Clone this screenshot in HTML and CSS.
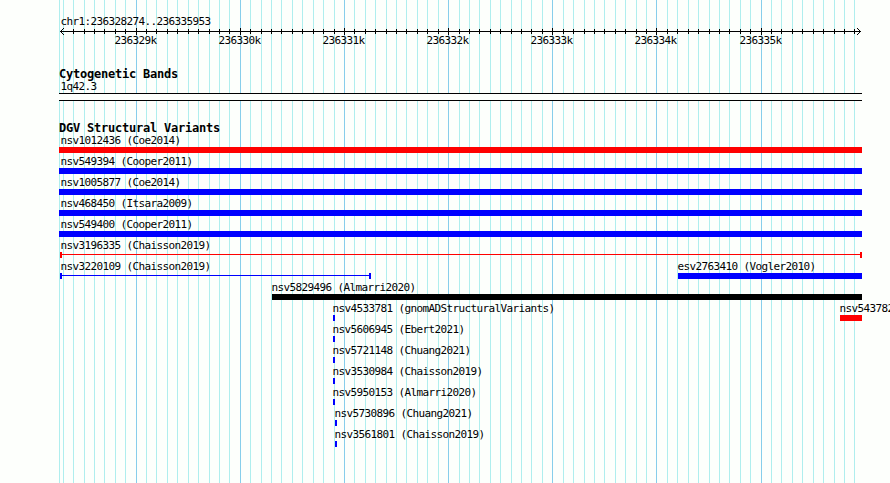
FILE: index.html
```html
<!DOCTYPE html>
<html lang="en">
<head>
    <meta charset="UTF-8">
    <title>chr1:236328274..236335953</title>
    <link rel="stylesheet" href="styles.css">
</head>
<body>

<div class="browser">
    <svg class="gridlines" id="gridlines" width="890" height="483" shape-rendering="crispEdges"></svg>

    <div class="panel">
        <div class="region">chr1:236328274..236335953</div>
        <svg class="ruler" id="ruler" width="830" height="7" shape-rendering="crispEdges"></svg>
        <div class="ruler-labels" id="ruler-labels"></div>

        <h2 class="track-title">Cytogenetic Bands</h2>
        <div class="label band-label">1q42.3</div>
        <div class="band"></div>

        <h2 class="track-title variants-title">DGV Structural Variants</h2>
        <div class="variants" id="variants"></div>
    </div>
</div>

<script src="script.js"></script>
</body>
</html>
```

FILE: styles.css
```css
body {
    margin: 0;
    background-color: #fdfffc;
    color: #000;
    font-family: "DejaVu Sans Mono", monospace;
    overflow: hidden;
}
.browser {
    position: relative;
    width: 890px;
    height: 483px;
    overflow: hidden;
}
/* grid sits behind every track */
.gridlines {
    position: absolute;
    top: 0;
    left: 0;
}
.grid-minor {
    fill: #afeeee;
}
.grid-major {
    fill: #87ceeb;
}
.panel {
    position: relative;
    padding: 16px 0 0 59px;
}
.region, .label, .ruler-labels {
    font-size: 11px;
    line-height: 12px;
    height: 12px;
    letter-spacing: -0.6226px;
    white-space: pre;
}
.region {
    padding-left: 1.5px;
}
.ruler {
    display: block;
    overflow: visible;
}
.ruler-labels {
    display: flex;
    padding-left: 0.5px;
}
.ruler-labels span {
    flex: none;
    width: 42px;
}
.track-title {
    margin: 21px 0 0;
    height: 12px;
    font-size: 12px;
    line-height: 12px;
    font-weight: bold;
    letter-spacing: -0.2246px;
    white-space: pre;
}
.band-label {
    padding-left: 1.5px;
    margin-top: 1px;
}
.band {
    box-sizing: border-box;
    width: 803px;
    height: 8px;
    border-top: 1px solid #000;
    border-bottom: 1px solid #000;
    background: #fdfffc;
}
.variants-title {
    height: 13px;
}
.row {
    display: flex;
    height: 21px;
}
.variant {
    flex: none;
    color: #00f;
}
.variant .label {
    color: #000;
    padding-left: 1.5px;
}
.shift .label {
    margin-left: -2px;
}
.bar {
    height: 6px;
    background: currentColor;
}
.range {
    box-sizing: border-box;
    height: 6px;
    margin-left: 1px;
    border: solid currentColor;
    border-width: 0 2px;
    background: linear-gradient(currentColor, currentColor) 0 2px / 100% 1px no-repeat;
}
.red {
    color: #f00;
}
.black {
    color: #000;
}
```

FILE: script.js
```js
const START = 236328274;
const END = 236335953;
const LEFT = 60;
const WIDTH = 800;

function toX(pos) {
    return Math.round(LEFT + (pos - START) * WIDTH / (END - START + 1));
}

// gridlines, ruler ticks and labels
let grid = '<rect class="grid-minor" x="59" y="0" width="1" height="483"/>';
let ticks = '<rect x="1" y="3" width="801" height="1"/>';
let labels = '';
let labelEnd = 59;
for (let pos = 236328300; pos <= END; pos += 100) {
    const x = toX(pos);
    const major = pos % 1000 === 0;
    grid += `<rect class="${major ? 'grid-major' : 'grid-minor'}" x="${x}" y="0" width="1" height="483"/>`;
    if (x > 65) {
        ticks += `<rect x="${x - 59}" y="${major ? 0 : 1}" width="1" height="${major ? 7 : 5}"/>`;
    }
    if (major) {
        const left = x - 22;
        labels += `<span style="margin-left:${left - labelEnd}px">${pos / 1000}k</span>`;
        labelEnd = left + 42;
    }
}
// arrow heads
for (let i = 1; i <= 3; i++) {
    for (const y of [3 - i, 3 + i]) {
        ticks += `<rect x="${1 + i}" y="${y}" width="1" height="1"/>`;
        ticks += `<rect x="${801 - i}" y="${y}" width="1" height="1"/>`;
    }
}
document.getElementById('gridlines').innerHTML = grid;
document.getElementById('ruler').innerHTML = ticks;
document.getElementById('ruler-labels').innerHTML = labels;

// [name, left, right, colour, glyph]
const rows = [
    [['nsv1012436 (Coe2014)', 59, 862, 'red', 'bar']],
    [['nsv549394 (Cooper2011)', 59, 862, '', 'bar']],
    [['nsv1005877 (Coe2014)', 59, 862, '', 'bar']],
    [['nsv468450 (Itsara2009)', 59, 862, '', 'bar']],
    [['nsv549400 (Cooper2011)', 59, 862, '', 'bar']],
    [['nsv3196335 (Chaisson2019)', 59, 862, 'red', 'range']],
    [['nsv3220109 (Chaisson2019)', 59, 371, '', 'range'], ['esv2763410 (Vogler2010)', 678, 862, 'shift', 'bar']],
    [['nsv5829496 (Almarri2020)', 272, 862, 'black shift', 'bar']],
    [['nsv4533781 (gnomADStructuralVariants)', 333, 335, 'shift', 'bar'], ['nsv543782', 840, 862, 'red shift', 'bar']],
    [['nsv5606945 (Ebert2021)', 333, 335, 'shift', 'bar']],
    [['nsv5721148 (Chuang2021)', 333, 335, 'shift', 'bar']],
    [['nsv3530984 (Chaisson2019)', 333, 335, 'shift', 'bar']],
    [['nsv5950153 (Almarri2020)', 333, 335, 'shift', 'bar']],
    [['nsv5730896 (Chuang2021)', 335, 337, 'shift', 'bar']],
    [['nsv3561801 (Chaisson2019)', 335, 337, 'shift', 'bar']]
];

document.getElementById('variants').innerHTML = rows.map(row => {
    let x = 59;
    const items = row.map(([name, left, right, colour, glyph]) => {
        const gap = left - x;
        x = right;
        return `<div class="variant ${colour}" style="margin-left:${gap}px;width:${right - left}px">` +
            `<div class="label">${name}</div><div class="${glyph}"></div></div>`;
    });
    return `<div class="row">${items.join('')}</div>`;
}).join('');
```
